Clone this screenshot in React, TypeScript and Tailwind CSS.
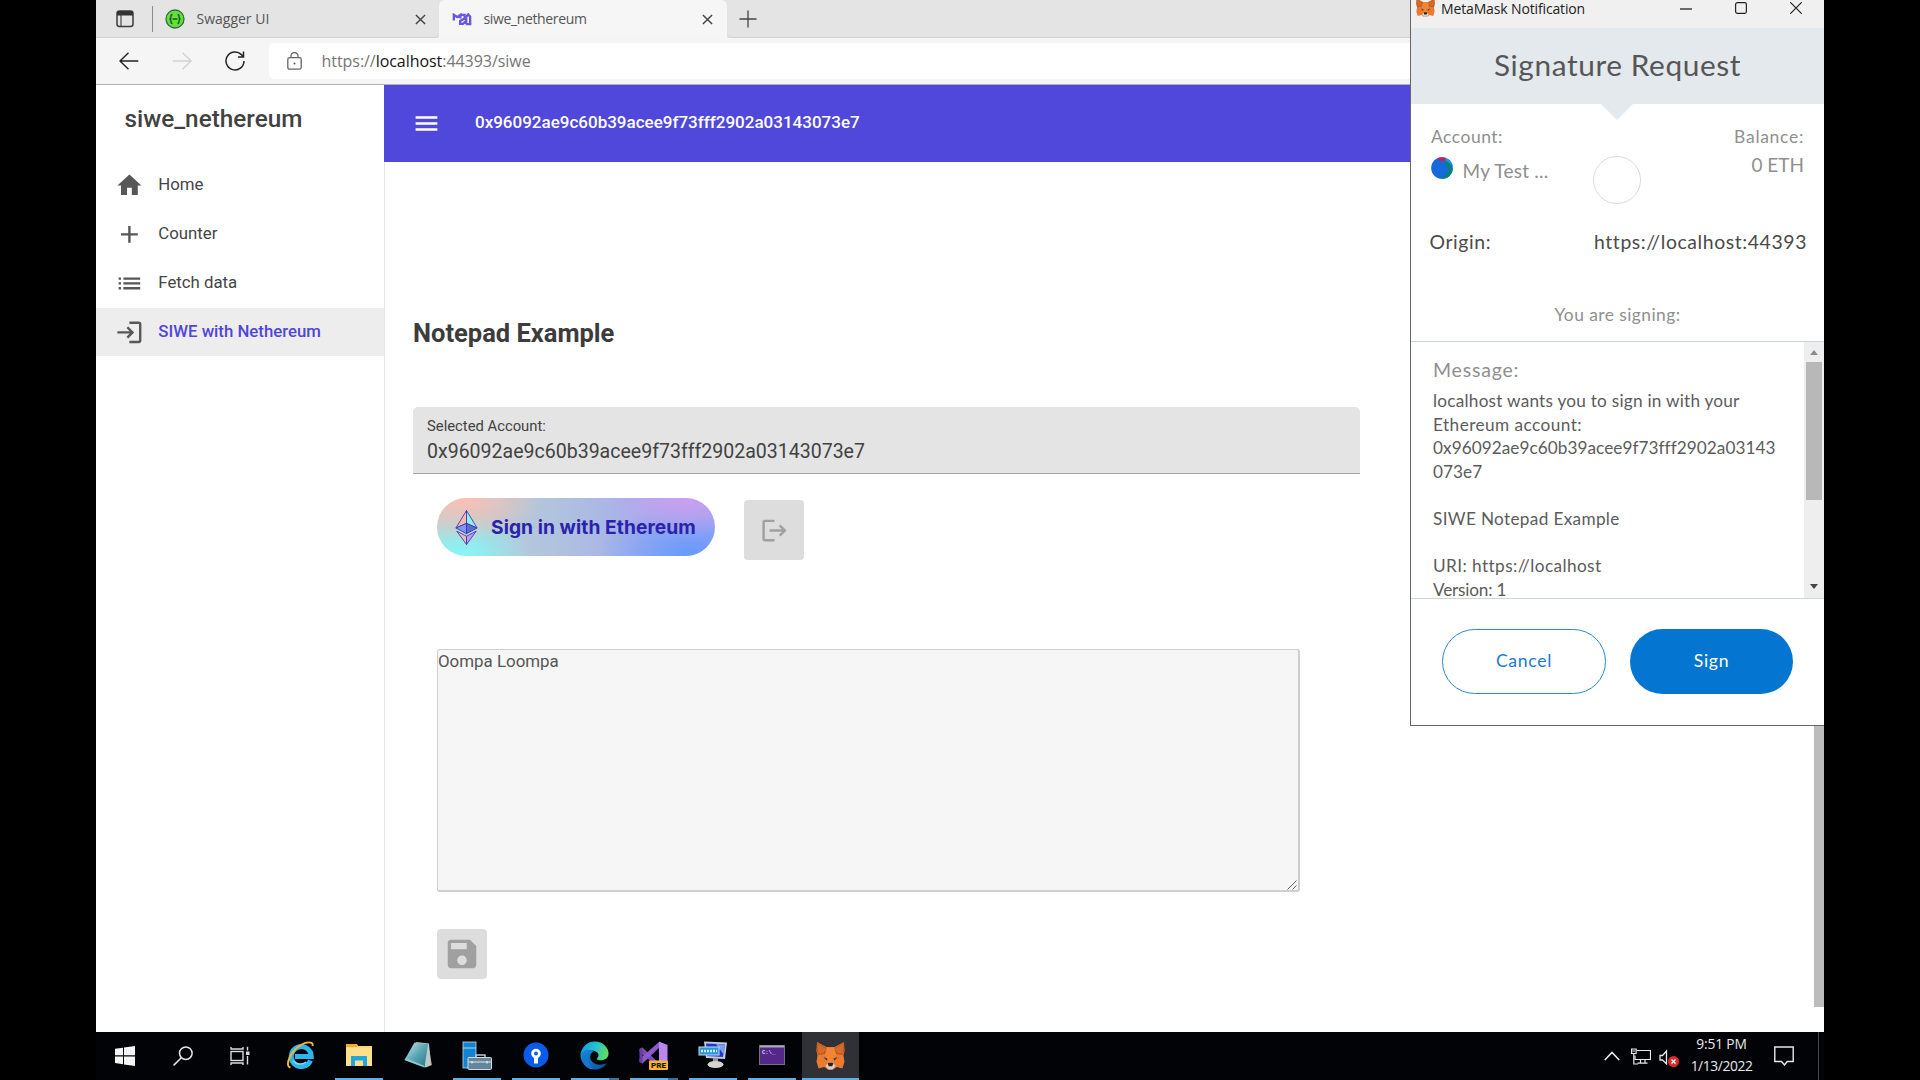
import type { ReactNode } from 'react';

const ACCOUNT = '0x96092ae9c60b39acee9f73fff2902a03143073e7';

function Glyph({ d, className }: { d: string; className: string }) {
  return (
    <svg viewBox="0 0 24 24" className={className} fill="currentColor">
      <path d={d} />
    </svg>
  );
}

const HOME = 'M10 20v-6h4v6h5v-8h3L12 3 2 12h3v8z';
const ADD = 'M19 13h-6v6h-2v-6H5v-2h6V5h2v6h6v2z';
const LIST = 'M3 13h2v-2H3v2zm0 4h2v-2H3v2zm0-8h2V7H3v2zm4 4h14v-2H7v2zm0 4h14v-2H7v2zM7 7v2h14V7H7z';
const LOGIN = 'M11 7L9.6 8.4l2.6 2.6H2v2h10.2l-2.6 2.6L11 17l5-5-5-5zm9 12h-8v2h8c1.1 0 2-.9 2-2V5c0-1.1-.9-2-2-2h-8v2h8v14z';
const LOGOUT = 'M17 7l-1.41 1.41L18.17 11H8v2h10.17l-2.58 2.58L17 17l5-5zM4 5h8V3H4c-1.1 0-2 .9-2 2v14c0 1.1.9 2 2 2h8v-2H4V5z';
const MENU = 'M3 18h18v-2H3v2zm0-5h18v-2H3v2zm0-7v2h18V6H3z';
const SAVE = 'M17 3H5c-1.11 0-2 .9-2 2v14c0 1.1.89 2 2 2h14c1.1 0 2-.9 2-2V7l-4-4zm-5 16c-1.66 0-3-1.34-3-3s1.34-3 3-3 3 1.34 3 3-1.34 3-3 3zm3-10H5V5h10v4z';

function CloseIcon({ className }: { className: string }) {
  return (
    <svg viewBox="0 0 12 12" className={className} fill="none" stroke="currentColor" strokeWidth="1.6">
      <path d="M1 1l10 10M11 1L1 11" />
    </svg>
  );
}

function Fox({ className }: { className: string }) {
  return (
    <svg viewBox="0 0 28 28" className={className}>
      <path d="M1 1l9.500 5h7L27 1l.5 9-1 4 1 6-2 6.500-5.500-1.500-3.500 2.500h-5L8 25l-5.500 1.500L.5 20l1-6-1-4z" fill="#ea7a2f" />
      <path d="M1 1l9.500 6-2 5.500-6.500 1L.5 9zM27 1l-9.500 6 2 5.500 6.500 1L27.500 9z" fill="#b9591f" />
      <path d="M1.500 2l8.500 6-3 3.500-5 .5zM26.500 2L18 8l3 3.500 5 .5z" fill="#d86a28" />
      <path d="M10.500 6h7l1.500 7-2 9h-6l-2-9z" fill="#f28433" />
      <path d="M7 15.500l4 1.500-.5 2zM21 15.500L17 17l.5 2z" fill="#33384a" />
      <path d="M9 24l3-3h4l3 3-3 3.500h-4z" fill="#dccfc6" />
      <path d="M11.300 21.800l.9-.9h3.600l.9.9-1 2.500h-3.400z" fill="#2b2320" />
    </svg>
  );
}

function TabStrip() {
  return (
    <div className="flex h-[38px] bg-[#e4e4e4] font-['Open_Sans','Noto_Sans',sans-serif] text-[14px] text-[#555]">
      <div className="flex w-[343px] items-center rounded-br-[5px] border-b border-[#d2d2d2] pl-[20px] pt-[1px]">
        <svg viewBox="0 0 18 18" className="h-[18px] w-[18px]">
          <rect x="1" y="1" width="16" height="15.500" rx="2.500" fill="none" stroke="#3c3c3c" strokeWidth="1.500" />
          <path d="M1 3.500Q1 1 3.500 1h11Q17 1 17 3.500V5.500H1z" fill="#333" />
          <path d="M5 5v11" stroke="#3c3c3c" strokeWidth="1.100" />
        </svg>
        <div className="ml-[18px] h-[26px] w-px bg-[#8c8c8c]" />
        <svg viewBox="0 0 20 20" className="ml-[12px] h-[20px] w-[20px]">
          <circle cx="10" cy="10" r="9" fill="#62e232" stroke="#2f6a4a" strokeWidth="1.300" />
          <path d="M7.500 5.500c-1.500 0-1.500.6-1.500 2s-.2 2.200-1.400 2.500c1.200.3 1.400 1.100 1.400 2.500s0 2 1.500 2M12.500 5.500c1.500 0 1.500.6 1.500 2s.2 2.200 1.400 2.500c-1.200.3-1.400 1.100-1.400 2.500s0 2-1.500 2M7.500 10h5" fill="none" stroke="#234d3c" strokeWidth="1.400" />
        </svg>
        <span className="-mt-[2px] ml-[11.5px]">Swagger UI</span>
        <CloseIcon className="ml-auto mr-[13px] h-[11px] w-[11px] text-[#444]" />
      </div>
      <div className="flex w-[288px] items-center rounded-t-[6px] bg-[#f6f6f6] pl-[13px] pr-[14px] pt-[1px]">
        <svg viewBox="0 0 20 14" className="-mt-px h-[13px] w-[20px]" fill="none" stroke="#6657e6" strokeWidth="2.500">
          <path d="M1.200 8V2l3.600 2.400 3.500-2.400v4" /><path d="M8.300 2h4.500v4L8 8.500v3.300h3l3.500-3.300" /><path d="M14.500 12V4l2.200-2.500 2.100 2.500v8h-4.300" />
        </svg>
        <span className="-mt-[2px] ml-[11.5px] tracking-[-0.36px]">siwe_nethereum</span>
        <CloseIcon className="ml-auto h-[11px] w-[11px] text-[#444]" />
      </div>
      <div className="flex flex-1 items-center rounded-bl-[5px] border-b border-[#d2d2d2] pl-[12px]">
        <svg viewBox="0 0 18 18" className="h-[18px] w-[18px]" stroke="#444" strokeWidth="1.300">
          <path d="M9 .5v17M.5 9h17" />
        </svg>
      </div>
    </div>
  );
}

function Toolbar() {
  return (
    <div className="flex h-[47px] items-center border-b border-[#b0b0b0] bg-[#f5f5f5]">
      <svg viewBox="0 0 20 18" className="-mt-px ml-[23px] h-[18px] w-[20px]" fill="none" stroke="#222" strokeWidth="1.400">
        <path d="M9.500.8L1 9l8.500 8.200M1 9h18.300" />
      </svg>
      <svg viewBox="0 0 20 18" className="-mt-px ml-[33px] h-[18px] w-[20px]" fill="none" stroke="#d2d2d2" strokeWidth="1.400">
        <path d="M10.500.8L19 9l-8.500 8.200M19 9H.7" />
      </svg>
      <svg viewBox="0 0 20 20" className="ml-[33px] h-[20px] w-[20px]" fill="none" stroke="#222" strokeWidth="1.500">
        <path d="M19 10a9 9 0 1 1-2.600-6.400L18.500 6M18.500.5V6H13" />
      </svg>
      <div className="ml-[24px] flex h-[36px] flex-1 items-center rounded-l-[5px] bg-white pl-[18px]">
        <svg viewBox="0 0 15 18" className="-mt-px h-[18px] w-[15px]" fill="none" stroke="#666" strokeWidth="1.300">
          <rect x=".8" y="5.700" width="13.400" height="11.500" rx="1.800" />
          <path d="M4 5.500V4a3.500 3.500 0 0 1 7 0v1.500" />
          <circle cx="7.500" cy="11.500" r="1" fill="#555" stroke="none" />
        </svg>
        <span className="ml-[19.5px] pb-[1px] font-['Open_Sans','Noto_Sans',sans-serif] text-[16px] tracking-[-0.05px] text-[#767676]">
          https://<span className="text-[#151515]">localhost</span>:44393/siwe
        </span>
      </div>
    </div>
  );
}

function NavItem({ icon, label, active }: { icon: string; label: string; active?: boolean }) {
  return (
    <a className={active ? 'flex h-[48px] items-center bg-[#ededed] pl-[19px] text-[16.8px] font-medium text-[#5046da]' : 'flex h-[48px] items-center pl-[19px] text-[16.8px] text-[#454545]'}>
      <Glyph d={icon} className="mt-px h-[28.8px] w-[28.8px] text-[#575757]" />
      <span className="ml-[14.5px]">{label}</span>
    </a>
  );
}

function Sidebar() {
  return (
    <aside className="flex w-[288px] flex-col">
      <div className="flex h-[76px] items-start pl-[28.5px] pt-[16px] text-[24.3px] font-medium leading-[36px] text-[#424242]">siwe_nethereum</div>
      <nav className="flex flex-col gap-[0.9px]">
        <NavItem icon={HOME} label="Home" />
        <NavItem icon={ADD} label="Counter" />
        <NavItem icon={LIST} label="Fetch data" />
        <NavItem icon={LOGIN} label="SIWE with Nethereum" active />
      </nav>
    </aside>
  );
}

function EthereumButton() {
  return (
    <button className="flex h-[58px] w-[278px] items-center rounded-full bg-[radial-gradient(ellipse_28%_75%_at_10%_0%,#fdbfb4_0%,transparent_100%),radial-gradient(ellipse_25%_75%_at_9%_100%,#83f8f8_0%,transparent_100%),radial-gradient(ellipse_30%_70%_at_90%_0%,#cb9fee_0%,transparent_100%),radial-gradient(ellipse_34%_90%_at_92%_100%,#6499fb_0%,transparent_100%),linear-gradient(90deg,#bcd2cf,#b2c4dd_40%,#a4aeec_75%,#a4a6f2)] pl-[18px]">
      <svg viewBox="0 0 22 34" className="h-[35px] w-[23px]" stroke="#3a2fa8" strokeWidth=".8" strokeLinejoin="round">
        <path d="M11 .5L.7 17.500 11 13z" fill="#f3b9b4" />
        <path d="M11 .5l10.300 17L11 13z" fill="#93f0f2" />
        <path d="M.7 17.500L11 13v10z" fill="#7d96f6" />
        <path d="M21.300 17.500L11 13v10z" fill="#5a6cd6" />
        <path d="M1.500 20.500L11 25.500v8z" fill="#f0b4c0" />
        <path d="M20.500 20.500L11 25.500v8z" fill="#c39af0" />
      </svg>
      <span className="ml-[13px] font-['Inter',sans-serif] text-[19.2px] font-bold tracking-[0.07px] text-[#2b22ac]">Sign in with Ethereum</span>
    </button>
  );
}

function Main() {
  return (
    <main className="flex flex-1 flex-col">
      <header className="flex h-[77px] items-center bg-[#5048da] pl-[28px] text-white">
        <Glyph d={MENU} className="h-[29px] w-[29px]" />
        <span className="-mt-px ml-[34px] text-[17px] font-medium">{ACCOUNT}</span>
      </header>
      <div className="flex flex-1 flex-col border-l border-[#e6e6e6] pl-[28px]">
        <h1 className="mt-[151px] h-[40px] text-[25.5px] font-bold leading-[40px] text-[#3c3c3c]">Notepad Example</h1>
        <div className="mt-[54px] flex h-[67px] w-[947px] flex-col rounded-t-[5px] border-b border-[#a5a5a5] bg-[#e4e4e4] pl-[14px] pt-[9px] text-[#424242]">
          <span className="text-[14.8px] leading-[20px]">Selected Account:</span>
          <span className="mt-[3px] text-[19.55px] leading-[26px]">{ACCOUNT}</span>
        </div>
        <div className="mt-[24px] flex items-start gap-[29px] pl-[24px]">
          <EthereumButton />
          <button className="mt-[2px] flex h-[60px] w-[60px] items-center justify-center rounded-[4px] bg-[#dddddd] text-[#a0a0a0]">
            <Glyph d={LOGOUT} className="h-[29px] w-[29px]" />
          </button>
        </div>
        <div className="ml-[24px] mt-[89px] flex h-[243px] w-[863px] items-start justify-between rounded-[3px] border border-b-2 border-r-2 border-[#cfcfcf] bg-[#f6f6f6]">
          <span className="text-[16.9px] leading-[22px] text-[#555]">Oompa Loompa</span>
          <svg viewBox="0 0 10 10" className="mr-px h-[10px] w-[10px] self-end" stroke="#666" strokeWidth="1">
            <path d="M.5 9.500l9-9M5.500 9.500l4-4" />
          </svg>
        </div>
        <button className="ml-[24px] mt-[37px] flex h-[50px] w-[50px] items-center justify-center rounded-[4px] bg-[#dddddd] text-[#a0a0a0]">
          <Glyph d={SAVE} className="h-[38px] w-[38px]" />
        </button>
      </div>
    </main>
  );
}

function MessageScrollbar() {
  return (
    <div className="flex w-[20px] flex-col items-center bg-[#eeeeee] pt-[8px]">
      <svg viewBox="0 0 8 5" className="h-[5px] w-[8px]" fill="#8c8c8c"><path d="M4 0l4 5H0z" /></svg>
      <div className="mt-[7px] h-[138px] w-[16px] bg-[#b8b8b8]" />
      <svg viewBox="0 0 8 5" className="mb-[9px] mt-auto h-[5px] w-[8px]" fill="#444"><path d="M4 5l4-5H0z" /></svg>
    </div>
  );
}

function SignatureDialog() {
  return (
    <section className="absolute right-0 top-0 flex h-[726px] w-[414px] flex-col border-b border-l border-[#666] bg-white font-['Lato',sans-serif]">
      <div className="flex h-[28px] items-start bg-[#f0f0f0] pl-[5px]">
        <Fox className="-mt-[2px] h-[19px] w-[19px]" />
        <span className="ml-[6px] font-['Open_Sans','Noto_Sans',sans-serif] text-[14px] leading-[18px] tracking-[-0.14px] text-[#222]">MetaMask Notification</span>
        <div className="ml-auto mr-[22px] mt-[2px] flex gap-[43px]">
          <svg viewBox="0 0 12 12" className="h-[12px] w-[12px]" stroke="#222" strokeWidth="1.300"><path d="M0 7h12" /></svg>
          <svg viewBox="0 0 12 12" className="h-[12px] w-[12px]" fill="none" stroke="#222" strokeWidth="1.200"><rect x=".6" y=".6" width="10.800" height="10.800" rx="1.800" /></svg>
          <svg viewBox="0 0 12 12" className="h-[12px] w-[12px]" stroke="#222" strokeWidth="1.200"><path d="M.3.3l11.400 11.400M11.700.3L.3 11.700" /></svg>
        </div>
      </div>
      <div className="flex h-[76px] items-center justify-center bg-[#e4e9ed] pb-[2px] text-[29.800px] tracking-[0.6px] text-[#565656]">Signature Request</div>
      <div className="grid h-[116px] grid-cols-3 pl-[20px] pr-[20px] text-[#8f8f8f]">
        <div className="flex flex-col pt-[22px]">
          <span className="text-[17.5px] leading-[21px] tracking-[0.5px]">Account:</span>
          <div className="mt-[14px] flex h-[21px] items-center">
            <svg viewBox="0 0 22 22" className="-mt-[7px] h-[22px] w-[22px]">
              <clipPath id="jazzicon"><circle cx="11" cy="11" r="10.800" /></clipPath>
              <g clipPath="url(#jazzicon)">
                <path d="M0 0h22v22H0z" fill="#1669dc" />
                <path d="M14 0h8v9l-8-6z" fill="#1b98e0" />
                <path d="M13 3l5 3 4 6v10H10l7.500-8z" fill="#05807a" />
                <path d="M7 0h8l-1 3.500q-3.500 1.500-6.500-.5z" fill="#c91d55" />
              </g>
            </svg>
            <span className="ml-[9.5px] whitespace-nowrap text-[19px] tracking-[0.24px]">My Test ...</span>
          </div>
        </div>
        <div className="flex flex-col items-center">
          <svg viewBox="0 0 32 16" className="h-[16px] w-[32px]" fill="#e4e9ed"><path d="M0 0h32L16 16z" /></svg>
          <div className="mt-[36px] h-[48px] w-[48px] rounded-full border border-[#dcdcdc]" />
        </div>
        <div className="flex flex-col items-end pt-[22px]">
          <span className="text-[17.5px] leading-[21px] tracking-[0.7px]">Balance:</span>
          <span className="mt-[7px] text-[19px] leading-[21px]">0 ETH</span>
        </div>
      </div>
      <div className="flex h-[41px] items-center justify-between pl-[18.5px] pr-[17px] pt-[2px] text-[19.400px] tracking-[0.6px] text-[#4a4a4a]">
        <span>Origin:</span>
        <span>https://localhost:44393</span>
      </div>
      <div className="h-[81px] border-b border-[#c8d6da] pt-[43px] text-center text-[17.400px] leading-[21px] tracking-[0.45px] text-[#8f8f8f]">You are signing:</div>
      <div className="flex h-[257px] border-b border-[#cdd6dd]">
        <div className="flex flex-1 flex-col overflow-hidden pl-[22px] pt-[17px]">
          <span className="text-[19.5px] leading-[21px] tracking-[0.8px] text-[#8f8f8f]">Message:</span>
          <p className="mt-[9px] text-[17.2px] leading-[23.6px] text-[#5b5b5b]">
            <span className="tracking-[0.24px]">localhost wants you to sign in with your</span><br />
            <span className="tracking-[0.45px]">Ethereum account:</span><br />
            <span className="tracking-[0.05px]">0x96092ae9c60b39acee9f73fff2902a03143</span><br />
            <span className="tracking-[0.05px]">073e7</span><br />
            <br />
            <span className="tracking-[0.33px]">SIWE Notepad Example</span><br />
            <br />
            <span className="tracking-[0.42px]">URI: https://localhost</span><br />
            <span className="tracking-[-0.2px]">Version: 1</span>
          </p>
        </div>
        <MessageScrollbar />
      </div>
      <div className="flex gap-[24px] pl-[31px] pt-[30px] text-[17.6px] tracking-[0.7px]">
        <button className="h-[65px] w-[164px] rounded-full border-[1.5px] border-[#2a8ad4] text-[#1a7ad0]">Cancel</button>
        <button className="h-[65px] w-[163px] rounded-full bg-[#0475d1] text-white">Sign</button>
      </div>
    </section>
  );
}

function Task({ children, state }: { children: ReactNode; state?: 'open' | 'stacked' | 'active' }) {
  return (
    <div className={state === 'active' ? 'flex h-[48px] w-[57px] flex-col items-center bg-[#2f3136]' : 'flex h-[48px] w-[58.9px] flex-col items-center'}>
      <div className="flex h-[46px] items-center justify-center">{children}</div>
      {state === 'active' && <div className="h-[2px] w-full bg-[#5eaeea]" />}
      {state === 'open' && <div className="h-[2px] w-[48px] bg-[#5eaeea]" />}
      {state === 'stacked' && (
        <div className="flex h-[2px] w-[48px] bg-[#3f7196]"><div className="h-full w-[38px] bg-[#5eaeea]" /></div>
      )}
    </div>
  );
}

function Taskbar() {
  return (
    <footer className="flex h-[48px] bg-[#020307]">
      <div className="flex w-[175px] items-center">
        <svg viewBox="0 0 20 20" className="ml-[18.5px] h-[20px] w-[20px]" fill="#f5f5f5">
          <path d="M0 2.800l8-1.100v7.600H0zM9 1.500L20 0v9.300H9zM0 10.500h8v7.700l-8-1.100zM9 10.500h11V20L9 18.400z" />
        </svg>
        <svg viewBox="0 0 20 20" className="ml-[38px] h-[20px] w-[20px]" fill="none" stroke="#e6e6e6" strokeWidth="1.500">
          <circle cx="12.800" cy="7.200" r="6.300" /><path d="M8.300 11.700L.6 19.400" />
        </svg>
        <svg viewBox="0 0 20 20" className="-mt-px ml-[37px] h-[20px] w-[20px]" fill="none" stroke="#dcdcdc" strokeWidth="1.400">
          <rect x="1" y="5.500" width="12" height="9" /><path d="M1 1v2h12V1M1 19v-2h12v2M17.500.8v3.700M17.500 10v8.500" /><path d="M16 5.500h3.500v3.500H16z" fill="#dcdcdc" stroke="none" />
        </svg>
      </div>
      <Task>
        <svg viewBox="0 0 28 28" className="h-[28px] w-[28px]" fill="none">
          <path d="M24.500 19.500a10 10 0 1 1 .8-4H9" stroke="#2fb4ee" strokeWidth="5" />
          <path d="M20 21a9.500 9.500 0 0 1-13-1" stroke="#8adcf8" strokeWidth="1.500" />
          <path d="M4.500 26.500C-2 25 5 10 14 4.500 20 .5 28 0 26.500 5" stroke="#f2b936" strokeWidth="1.900" />
        </svg>
      </Task>
      <Task state="open">
        <svg viewBox="0 0 26 24" className="h-[24px] w-[26px]">
          <path d="M0 1h11l1 2h14v20H0z" fill="#fbd876" /><path d="M0 1h11v3H0z" fill="#f0ad2e" /><path d="M0 5h26v17.500H0z" fill="#fee08d" />
          <path d="M5 13h16v10h-4v-5.500H9V23H5z" fill="#21a5dc" />
        </svg>
      </Task>
      <Task>
        <svg viewBox="0 0 28 28" className="h-[28px] w-[28px]">
          <defs><linearGradient id="pad" x1="0" y1="0" x2="1" y2="1"><stop offset="0" stopColor="#d3e9ea" /><stop offset=".5" stopColor="#5ba7b6" /><stop offset="1" stopColor="#257383" /></linearGradient></defs>
          <path d="M24 3l4 21-6 2.500z" fill="#a98e5c" /><path d="M12 1L25 2.500 27 24l-6 2.500z" fill="#bcc8cc" />
          <path d="M10.500 1.500L24 3l-3.500 23.500L.5 19z" fill="url(#pad)" />
          <path d="M.5 19l20 7.500.2-1.500L2 17z" fill="#8ccad0" />
        </svg>
      </Task>
      <Task state="open">
        <svg viewBox="0 0 30 28" className="h-[29px] w-[30px]">
          <rect x="1" y=".5" width="13" height="26" fill="#1183d0" stroke="#c4dcec" strokeWidth=".8" />
          <path d="M1 6.500h13" stroke="#a8d8f5" /><path d="M14 16v-2.500h9V16" fill="none" stroke="#b9c9d1" strokeWidth="1.500" />
          <rect x="6" y="16" width="23.500" height="12" rx="1" fill="#64869a" stroke="#d0dce2" /><path d="M6 20.500h23" stroke="#dbe5ea" /><path d="M10 19.500v2.500M25 19.500v2.500" stroke="#fff" />
        </svg>
      </Task>
      <Task state="open">
        <svg viewBox="0 0 26 26" className="h-[26px] w-[26px]">
          <circle cx="13" cy="13" r="12.500" fill="#0b5bea" /><path d="M11 15h4v6.500h-4z" fill="#fff" /><circle cx="13" cy="11.500" r="4.800" fill="#fff" /><circle cx="13" cy="11.500" r="1.900" fill="#0b5bea" />
        </svg>
      </Task>
      <Task state="stacked">
        <svg viewBox="0 0 29 29" className="h-[29px] w-[29px]">
          <defs>
            <linearGradient id="edgeTop" x1="0" y1=".3" x2="1" y2=".6"><stop offset="0" stopColor="#159bdc" /><stop offset=".5" stopColor="#26c2d0" /><stop offset="1" stopColor="#66dc58" /></linearGradient>
            <linearGradient id="edgeLow" x1="0" y1="0" x2="1" y2="1"><stop offset="0" stopColor="#1a8cde" /><stop offset="1" stopColor="#0c4d9b" /></linearGradient>
          </defs>
          <path d="M.5 13C2 5 8 .5 14.500.5 23 .5 29 7 28.500 13c-.3 5-5 7-10 6-3-.6-1-2 0-4 .5-4-4-6-9-5.500C5 10 2 11 .5 13z" fill="url(#edgeTop)" />
          <path d="M.5 13C3 8.500 9 7.500 14 10c-4 2-5 7-2 10.500 4 4.500 11 3.500 14.800 1.500C24 26.500 19 29 14 28.500 6 28 0 21 .5 13z" fill="url(#edgeLow)" />
          <path d="M10.500 12q-6 8 3 16.300Q5 28 3 20c-1-5 3-8 7.500-8z" fill="#1478cc" />
        </svg>
      </Task>
      <Task state="stacked">
        <svg viewBox="0 0 29 29" className="h-[29px] w-[29px]">
          <path d="M.5 8l3-1.500L22 24l-2 3L.5 11z" fill="#7b4bb4" /><path d="M.5 21l3 1.500L22 5l-2-4L.5 18z" fill="#9158cb" /><path d="M.5 8l3-1.500v16L.5 21z" fill="#6a3b9c" /><path d="M20 .5l8.500 3.500V26l-8.500 3z" fill="#b888f0" />
          <rect x="10" y="19.500" width="19" height="9.500" rx="1" fill="#fcb53b" />
          <text x="19.500" y="27.300" textAnchor="middle" fontFamily="Roboto" fontWeight="900" fontSize="8" fill="#1b1406">PRE</text>
        </svg>
      </Task>
      <Task state="open">
        <svg viewBox="0 0 30 28" className="h-[28px] w-[30px]">
          <path d="M6 .5L29 1.500 27 18 8 17z" fill="#c5ccda" /><path d="M8 2.500l19 .8L25 16l-16-1z" fill="#1c38ce" /><path d="M18 3l9 .5L26 14z" fill="#7a9bf2" />
          <rect x="1" y="6" width="20" height="8" fill="#2d93d2" stroke="#bfe1f4" /><path d="M3 10h16" stroke="#c6e8fa" strokeWidth="2.500" strokeDasharray="2 1" />
          <path d="M15 17h5v4h-5z" fill="#999" /><ellipse cx="17.500" cy="23.500" rx="8" ry="3.500" fill="#d4d4d4" />
        </svg>
      </Task>
      <Task state="open">
        <svg viewBox="0 0 26 20" className="h-[20px] w-[26px]">
          <rect x=".5" y=".5" width="25" height="19" fill="#54288a" stroke="#77707f" /><path d="M1 1.500h24" stroke="#a9a9b6" strokeWidth="2" />
          <text x="3" y="9" fontFamily="Liberation Mono" fontWeight="700" fontSize="5.500" fill="#ddd4ea">C:\_</text>
        </svg>
      </Task>
      <div className="pl-px">
        <Task state="active"><Fox className="h-[29px] w-[29px]" /></Task>
      </div>
      <div className="ml-auto flex items-center text-[#e8e8e8]">
        <svg viewBox="0 0 16 10" className="h-[10px] w-[16px]" fill="none" stroke="#e8e8e8" strokeWidth="1.600"><path d="M.8 9L8 1.500 15.200 9" /></svg>
        <svg viewBox="0 0 20 17" className="ml-[11px] mt-[1px] h-[17px] w-[20px]" fill="none" stroke="#e8e8e8" strokeWidth="1.200">
          <path d="M5.500 2.500h14v9H4v-4M9.500 11.500v3M14 11.500v3M6.500 15.200h10" /><path d="M.6 1h4.500v4.500H.6zM2.800 5.500V16H7M1.500 3h2.500" />
        </svg>
        <svg viewBox="0 0 21 19" className="ml-[8px] mt-[4px] h-[19px] w-[21px]">
          <path d="M1 6.500h2.500L7.500 2v13l-4-4H1z" fill="none" stroke="#e8e8e8" strokeWidth="1.300" />
          <circle cx="14.500" cy="12.500" r="5.500" fill="#de2b2b" /><path d="M12.500 10.500l4 4M16.500 10.500l-4 4" stroke="#fff" strokeWidth="1.300" />
        </svg>
        <div className="-mt-[2px] ml-[10px] flex w-[63px] flex-col items-center font-['Open_Sans','Noto_Sans',sans-serif] text-[13.8px] leading-[22px]">
          <span className="whitespace-nowrap tracking-[-0.15px]">9:51 PM</span>
          <span className="whitespace-nowrap tracking-[-0.4px]">1/13/2022</span>
        </div>
        <svg viewBox="0 0 20 20" className="ml-[21px] h-[20px] w-[20px]" fill="none" stroke="#e8e8e8" strokeWidth="1.400"><path d="M.8 1h18.400v14.500h-6L10.500 19l-3-3.500H.8z" /></svg>
        <div className="ml-[24px] mr-[5px] h-[48px] w-px bg-[#45474b]" />
      </div>
    </footer>
  );
}

export default function App() {
  return (
    <div className="flex h-[1080px] w-[1920px] justify-center overflow-hidden bg-black font-['Roboto',sans-serif]">
      <div className="relative flex w-[1728px] flex-col bg-white">
        <TabStrip />
        <Toolbar />
        <div className="flex h-[947px]">
          <Sidebar />
          <Main />
          <div className="-ml-[10px] h-[922px] w-[10px] self-start bg-[linear-gradient(to_bottom,transparent_77px,#bcbcbc_77px)]" />
        </div>
        <Taskbar />
        <SignatureDialog />
      </div>
    </div>
  );
}
